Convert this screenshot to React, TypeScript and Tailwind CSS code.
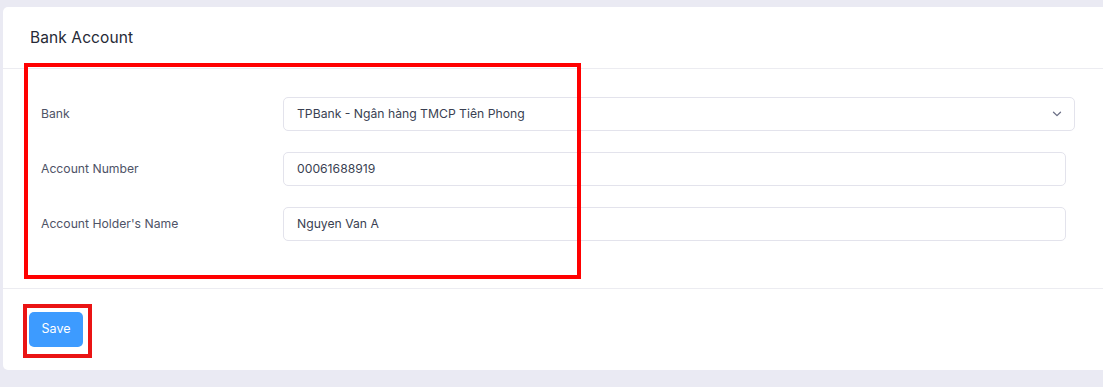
import React from 'react';

const fields = [
  { label: 'Account Number', value: '00061688919' },
  { label: "Account Holder's Name", value: 'Nguyen Van A' },
];

export default function App() {
  return (
    <div
      className="relative w-[1103px] h-[387px] overflow-hidden bg-[#eaeaf3] pt-[7px] pl-[3px]"
      style={{ fontFamily: 'Inter, "Noto Sans", sans-serif' }}
    >
      <div className="w-[1120px] h-[363px] bg-white rounded-[5px] flex flex-col">
        {/* header */}
        <div className="h-[62px] flex items-center pl-[27px] border-b border-[#ececf1] shrink-0">
          <h2 className="text-[15.5px] text-[#262a36] tracking-[0.1px]">Bank Account</h2>
        </div>

        {/* body */}
        <div className="flex flex-col gap-[21px] pt-[28px] pb-[47px] pl-[38px] border-b border-[#ececf1]">
          <div className="flex items-center">
            <label className="w-[242px] text-[12.2px] text-[#4e5366]">Bank</label>
            <div className="w-[792px] h-[34px] border border-[#e3e3ec] rounded-[5px] flex items-center justify-between pl-[13px] pr-[12px]">
              <span className="text-[12.2px] text-[#3a3f52]">TPBank - Ngân hàng TMCP Tiên Phong</span>
              <svg width="10" height="6" viewBox="0 0 10 6" fill="none">
                <path d="M1.5 1.2 5 4.6 8.5 1.2" stroke="#6b6f86" strokeWidth="1.3" strokeLinecap="round" strokeLinejoin="round" />
              </svg>
            </div>
          </div>
          {fields.map((f) => (
            <div key={f.label} className="flex items-center">
              <label className="w-[242px] text-[12.2px] text-[#4e5366]">{f.label}</label>
              <div className="w-[783px] h-[34px] border border-[#e3e3ec] rounded-[5px] flex items-center pl-[13px]">
                <span className="text-[12.2px] text-[#3a3f52]">{f.value}</span>
              </div>
            </div>
          ))}
        </div>

        {/* footer */}
        <div className="pt-[23px] pl-[26px]">
          <button className="w-[54px] h-[35px] rounded-[5px] bg-[#3d9bff] text-white text-[12.5px]">Save</button>
        </div>
      </div>

      {/* annotation boxes */}
      <div className="absolute left-[24px] top-[63px] w-[557px] h-[216px] border-[4px] border-[#ff0000] pointer-events-none" />
      <div className="absolute left-[23px] top-[304px] w-[69px] h-[54px] border-[4px] border-[#ea1414] pointer-events-none" />
    </div>
  );
}
